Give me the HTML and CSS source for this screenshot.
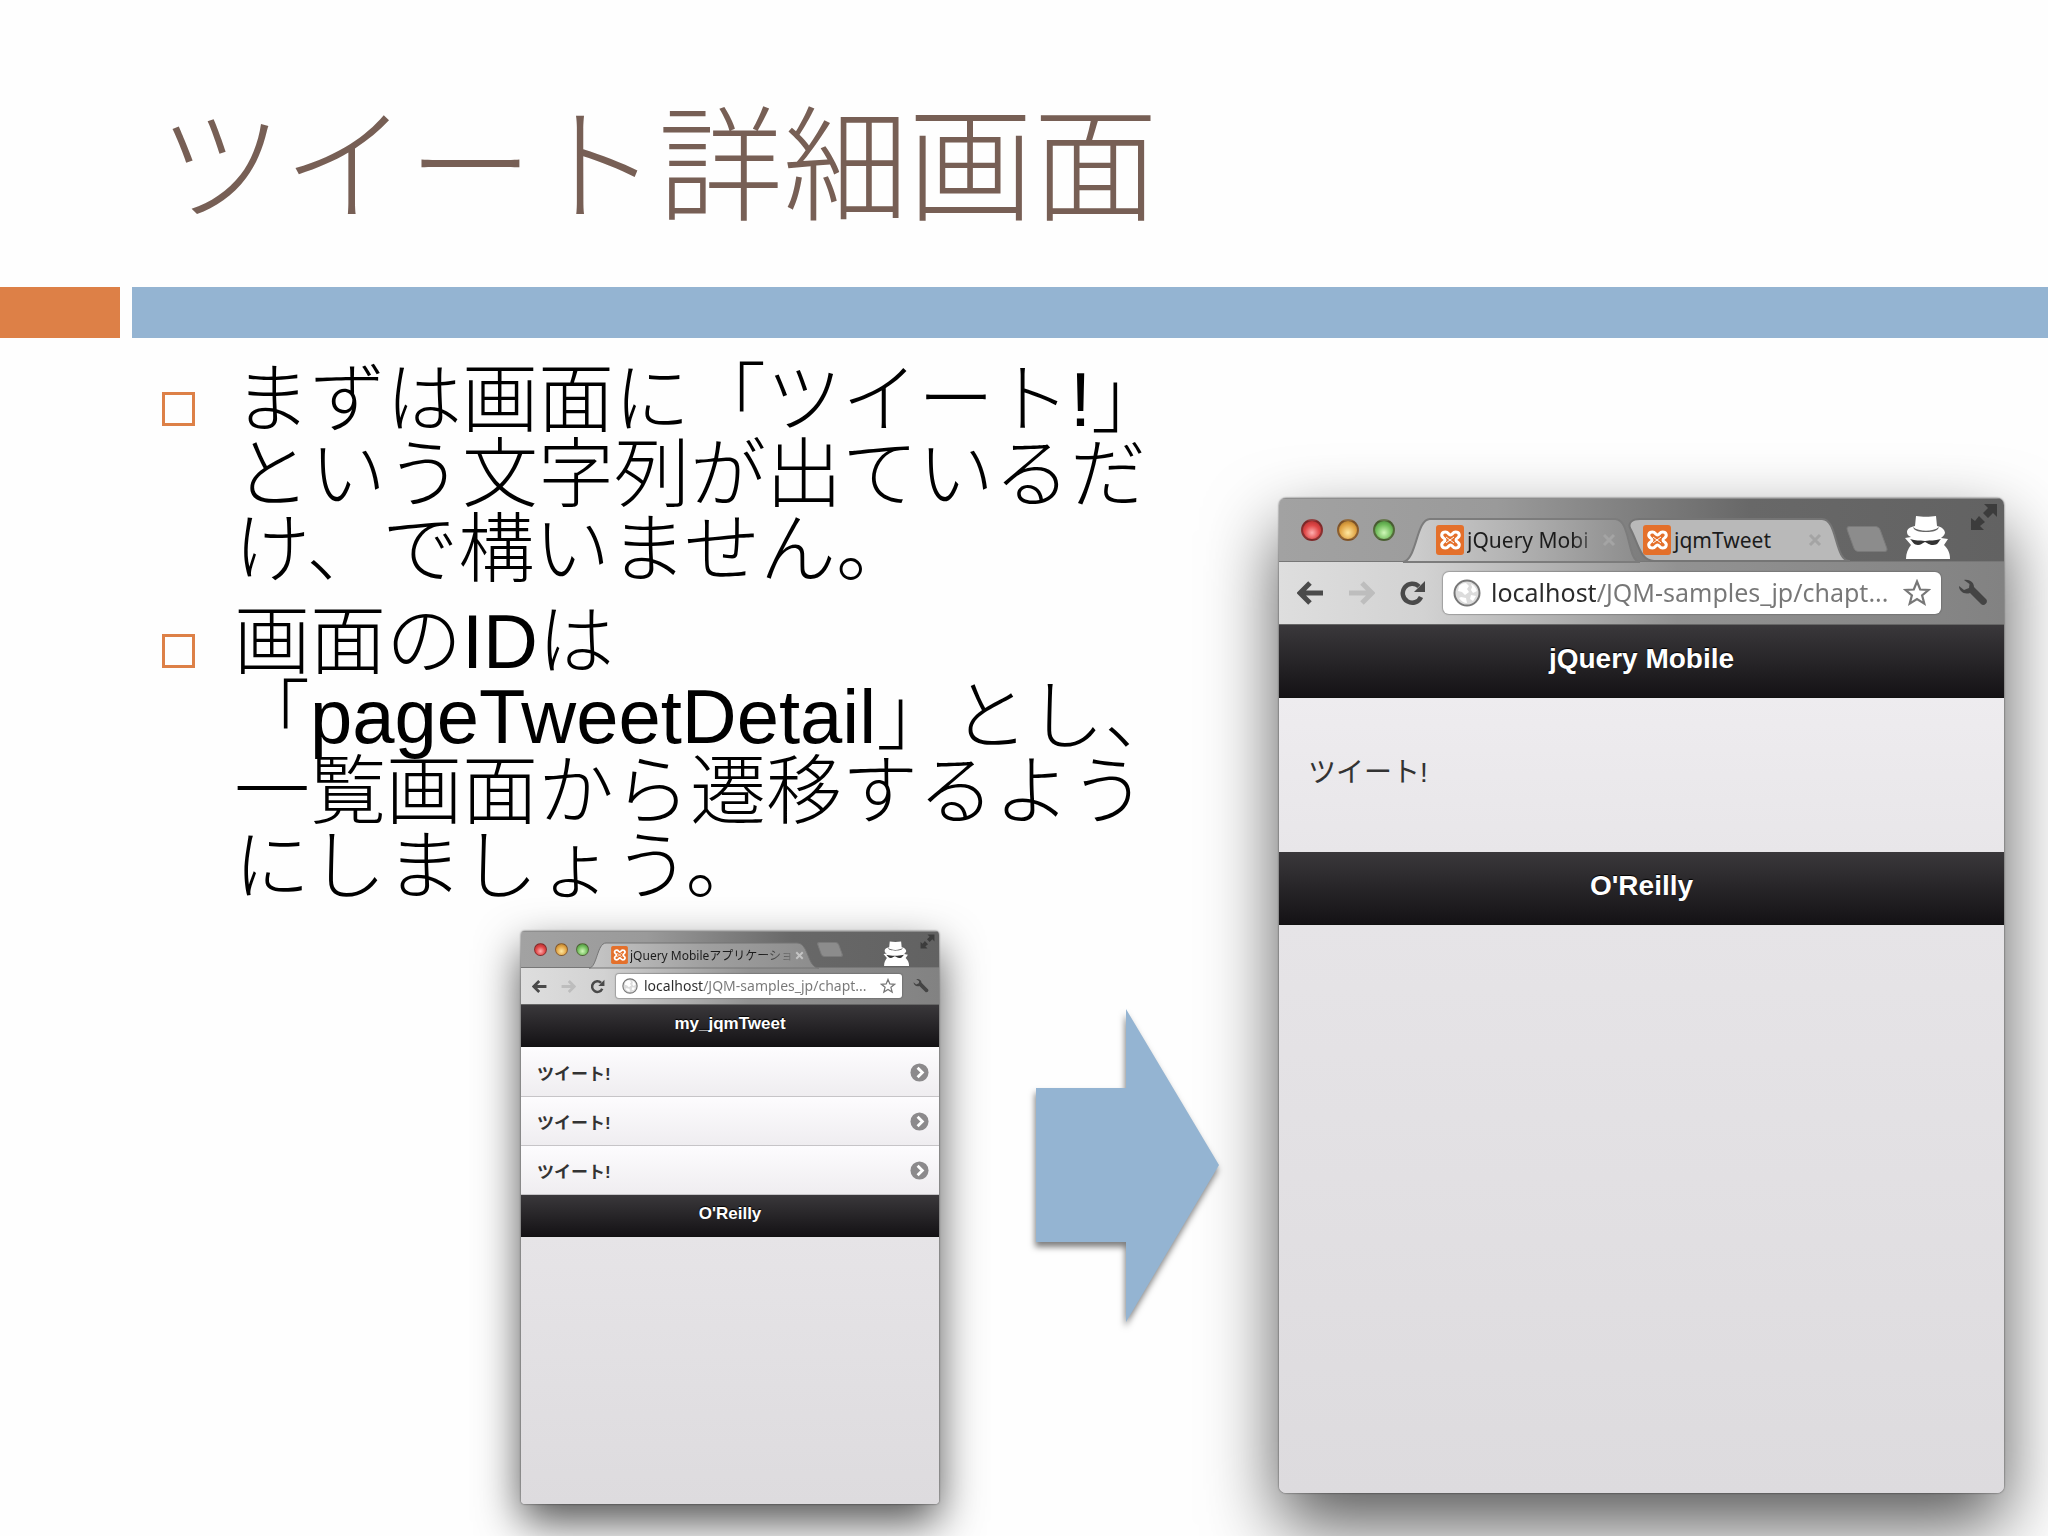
FILE: index.html
```html
<!DOCTYPE html>
<html lang="ja">
<head>
    <meta charset="UTF-8">
    <meta name="viewport" content="width=device-width, initial-scale=1.0">
    <title>ツイート詳細画面</title>
    <link rel="stylesheet" href="styles.css">
</head>
<body>
    <!-- Shared icons -->
    <svg class="sprite" aria-hidden="true">
        <symbol id="icon-back" viewBox="0 0 27 24">
            <path d="M13 2 3 12l10 10M4 12h22" fill="none" stroke="currentColor" stroke-width="5"/>
        </symbol>
        <symbol id="icon-forward" viewBox="0 0 27 24">
            <path d="M14 2l10 10-10 10M23 12H1" fill="none" stroke="currentColor" stroke-width="5"/>
        </symbol>
        <symbol id="icon-reload" viewBox="0 0 27 26">
            <path d="M20 6.500A9.500 9.500 0 1 0 22 17" fill="none" stroke="currentColor" stroke-width="4.500"/>
            <path d="M26 1v11H15z" fill="currentColor"/>
        </symbol>
        <symbol id="icon-globe" viewBox="0 0 28 28">
            <circle cx="14" cy="14" r="12.500" fill="#dcdcdc" stroke="#777" stroke-width="2"/>
            <path d="M6 7c2-2 4-3 7-3l3 3-2 3 2 3-4 3-3-3-4-1zM18 5c3 1 5 4 6 7l-4 2-2-3 1-3zM8 18l5 1 1 5c-3 0-6-2-8-5zM18 16l5 1-3 5-3-2z" fill="#fff"/>
        </symbol>
        <symbol id="icon-star" viewBox="0 0 28 28">
            <path d="M14 2.500l3.200 8 8.300.5-6.400 5.300 2.200 8.300L14 20l-7.300 4.600 2.200-8.300L2.500 11l8.300-.5z" fill="#fff" stroke="#777" stroke-width="2.200"/>
        </symbol>
        <symbol id="icon-wrench" viewBox="0 0 30 28">
            <path d="M6 1c5-1 10 2 10 7l12 12c3 3-2 8-5 5L12 14C6 16 1 12 1 7l5 4 5-2 .5-4z" fill="currentColor"/>
        </symbol>
        <symbol id="icon-favicon" viewBox="0 0 28 30">
            <rect width="28" height="30" rx="3" fill="#e4702b"/>
            <path d="M9.500 7c-4 0-5 4-2 6 2 1 2 3 0 4-3 2-2 6 2 6 3 0 3-3 5-3s2 3 5 3c4 0 5-4 2-6-2-1-2-3 0-4 3-2 2-6-2-6-3 0-3 3-5 3s-2-3-5-3z" fill="#e4702b" stroke="#fff" stroke-width="3"/>
            <path d="M10 12l8 6M18 12l-8 6" stroke="#fff" stroke-width="1"/>
        </symbol>
        <symbol id="icon-close" viewBox="0 0 14 14">
            <path d="M2 2l10 10M12 2 2 12" fill="none" stroke="currentColor" stroke-width="3"/>
        </symbol>
        <symbol id="icon-incognito" viewBox="0 0 46 44">
            <path d="M11 11l1-10c6 1 14 1 20 0l1 10c5 1 8 4 8 7-1 3-3 4-4 5l7 1-4 6c4 4 6 8 6 14H2c0-6 2-10 5-14l-6-7 6-1C4 21 3 19 3 17c0-3 3-5 8-6z" fill="#fff"/>
            <path d="M9 12c6 5 20 5 26 0-1 4-6 5-13 5s-12-1-13-5z" fill="#666"/>
            <path d="M6 24c6 2 9 1 15 2 6-1 9 0 16-2-3 3-3 6-8 6-4 0-5-2-8-3-3 1-4 3-7 3-4 0-5-3-8-6z" fill="#333"/>
        </symbol>
        <symbol id="icon-expand" viewBox="0 0 28 28">
            <path d="M14 1h13v13l-4-4-5 5-5-5 5-5zM1 15l4 3 4-5 6 6-5 4 4 4H1z" fill="currentColor"/>
        </symbol>
        <symbol id="icon-chevron" viewBox="0 0 20 20">
            <circle cx="10" cy="10" r="9.500" fill="#8c8a8c"/>
            <path d="M8 5l5 5-5 5" fill="none" stroke="#fff" stroke-width="3"/>
        </symbol>
    </svg>

    <main class="slide">
        <h1 class="slide-title">ツイート詳細画面</h1>
        <div class="rule">
            <span class="rule-accent"></span>
            <span class="rule-line"></span>
        </div>

        <div class="slide-body">
            <div class="left">
                <ul class="bullets">
                    <li>まずは画面に「ツイート!」<br>という文字列が出ているだ<br>け、で構いません。</li>
                    <li>画面のIDは<br>「pageTweetDetail」とし、<br>一覧画面から遷移するよう<br>にしましょう。</li>
                </ul>

                <div class="flow">
                    <!-- List screen -->
                    <section class="window window-small">
                        <div class="tabstrip">
                            <span class="lights"><i class="light red"></i><i class="light yellow"></i><i class="light green"></i></span>
                            <button class="tab tab-active">
                                <svg class="tab-shape" viewBox="0 0 230 26" preserveAspectRatio="none">
                                    <defs>
                                        <linearGradient id="tabSmall"><stop offset="0" stop-color="#c6c6c6"/><stop offset=".5" stop-color="#a0a0a0"/><stop offset="1" stop-color="#8c8c8c"/></linearGradient>
                                    </defs>
                                    <path d="M0 26C8 26 8 1 17 1H208C220 1 218 26 230 26z" fill="url(#tabSmall)" stroke="#747474"/>
                                </svg>
                                <svg class="favicon"><use href="#icon-favicon"/></svg>
                                <span class="tab-title">jQuery Mobileアプリケーショ</span>
                                <svg class="tab-close"><use href="#icon-close"/></svg>
                            </button>
                            <button class="new-tab" aria-label="新しいタブ"></button>
                            <svg class="incognito"><use href="#icon-incognito"/></svg>
                            <svg class="expand"><use href="#icon-expand"/></svg>
                        </div>
                        <div class="toolbar">
                            <div class="nav">
                                <button aria-label="戻る"><svg><use href="#icon-back"/></svg></button>
                                <button class="disabled" aria-label="進む"><svg><use href="#icon-forward"/></svg></button>
                                <button aria-label="再読み込み"><svg><use href="#icon-reload"/></svg></button>
                            </div>
                            <div class="omnibox">
                                <svg><use href="#icon-globe"/></svg>
                                <input type="text" aria-label="アドレス" value="localhost/JQM-samples_jp/chapt...">
                                <svg><use href="#icon-star"/></svg>
                            </div>
                            <button class="wrench" aria-label="設定"><svg><use href="#icon-wrench"/></svg></button>
                        </div>
                        <h2 class="page-bar">my_jqmTweet</h2>
                        <ul class="tweets">
                            <li><a href="#detail">ツイート!<svg><use href="#icon-chevron"/></svg></a></li>
                            <li><a href="#detail">ツイート!<svg><use href="#icon-chevron"/></svg></a></li>
                            <li><a href="#detail">ツイート!<svg><use href="#icon-chevron"/></svg></a></li>
                        </ul>
                        <h2 class="page-bar">O'Reilly</h2>
                        <div class="page-rest"></div>
                    </section>

                    <svg class="arrow" viewBox="0 0 183 313">
                        <path d="M0 79H90V0L183 156 90 313V233H0z" fill="#94b4d2"/>
                    </svg>
                </div>
            </div>

            <!-- Detail screen -->
            <section class="window window-large" id="detail">
                <div class="tabstrip">
                    <span class="lights"><i class="light red"></i><i class="light yellow"></i><i class="light green"></i></span>
                    <button class="tab tab-active">
                        <svg class="tab-shape" viewBox="0 0 237 44" preserveAspectRatio="none">
                            <defs>
                                <linearGradient id="tabLarge"><stop offset="0" stop-color="#cfcfcf"/><stop offset=".5" stop-color="#b0b0b0"/><stop offset="1" stop-color="#8c8c8c"/></linearGradient>
                            </defs>
                            <path d="M0 44C14 42 13 1 27 1H212C228 1 224 44 237 44z" fill="url(#tabLarge)" stroke="#7c7c7c" stroke-width="2"/>
                        </svg>
                        <svg class="favicon"><use href="#icon-favicon"/></svg>
                        <span class="tab-title">jQuery Mobi</span>
                        <svg class="tab-close"><use href="#icon-close"/></svg>
                    </button>
                    <button class="tab tab-back">
                        <svg class="tab-shape" viewBox="0 0 222 44" preserveAspectRatio="none">
                            <path d="M12 1H194C210 1 206 43 222 43H26C12 43 10 24 2 10 0 5 4 1 12 1z" fill="#b9b9b9" stroke="#757575" stroke-width="2"/>
                        </svg>
                        <svg class="favicon"><use href="#icon-favicon"/></svg>
                        <span class="tab-title">jqmTweet</span>
                        <svg class="tab-close"><use href="#icon-close"/></svg>
                    </button>
                    <button class="new-tab" aria-label="新しいタブ"></button>
                    <svg class="incognito"><use href="#icon-incognito"/></svg>
                    <svg class="expand"><use href="#icon-expand"/></svg>
                </div>
                <div class="toolbar">
                    <div class="nav">
                        <button aria-label="戻る"><svg><use href="#icon-back"/></svg></button>
                        <button class="disabled" aria-label="進む"><svg><use href="#icon-forward"/></svg></button>
                        <button aria-label="再読み込み"><svg><use href="#icon-reload"/></svg></button>
                    </div>
                    <div class="omnibox">
                        <svg><use href="#icon-globe"/></svg>
                        <input type="text" aria-label="アドレス" value="localhost/JQM-samples_jp/chapt...">
                        <svg><use href="#icon-star"/></svg>
                    </div>
                    <button class="wrench" aria-label="設定"><svg><use href="#icon-wrench"/></svg></button>
                </div>
                <h2 class="page-bar">jQuery Mobile</h2>
                <p class="page-content">ツイート!</p>
                <h2 class="page-bar">O'Reilly</h2>
                <div class="page-rest"></div>
            </section>
        </div>
    </main>
</body>
</html>
```
FILE: styles.css
```css
*,
*::before {
    box-sizing: border-box;
}
body {
    margin: 0;
    background: #fefefe;
    color: #000;
    font-family: "Liberation Sans", "Noto Sans CJK JP", sans-serif;
}
button {
    border: 0;
    padding: 0;
    background: none;
    font: inherit;
    color: inherit;
}
svg {
    display: block;
    flex: none;
}
.sprite {
    position: absolute;
    width: 0;
    height: 0;
}

/* Slide */
.slide {
    min-height: 100vh;
    overflow: hidden;
}
.slide-title {
    margin: 0;
    padding: 78px 158px 29px;
    font-size: 125px;
    line-height: 180px;
    font-weight: 300;
    color: #775f55;
}
.rule {
    display: flex;
    gap: 12px;
    height: 51px;
}
.rule-accent {
    width: 120px;
    background: #dd8047;
}
.rule-line {
    flex: 1;
    background: #94b4d2;
}
.slide-body {
    display: grid;
    grid-template-columns: 1119fr 725fr;
    align-items: start;
    padding: 0 44px 0 160px;
}

/* Bullets */
.bullets {
    margin: 0;
    padding: 24px 0 0;
    list-style: none;
    font-size: 76px;
    line-height: 75px;
    font-weight: 300;
    white-space: nowrap;
}
.bullets li {
    position: relative;
    padding-left: 74px;
}
.bullets li + li {
    margin-top: 17px;
}
.bullets li::before {
    content: "";
    position: absolute;
    left: 2px;
    top: 30px;
    width: 33px;
    height: 34px;
    border: 3px solid #dd8047;
}

/* List screen, arrow */
.flow {
    display: flex;
    align-items: flex-start;
    gap: 97px;
    padding: 27px 60px 0 361px;
}
.flow .window {
    flex: 418 1 0;
    min-width: 0;
}
.arrow {
    flex: 183 1 0;
    min-width: 0;
    margin-top: 78px;
    overflow: visible;
    filter: drop-shadow(-1px 5px 3px rgba(0, 0, 0, 0.5));
}

/* Browser window */
.window {
    --strip: 37px;
    --bar: 42px;
    --text: 17px;
    overflow: hidden;
    border-radius: 4px;
    background: #e2e0e3;
    box-shadow: 0 0 2px rgba(0, 0, 0, 0.7), 0 18px 44px rgba(0, 0, 0, 0.68);
}
.window-large {
    --strip: 64px;
    --bar: 73px;
    --text: 28px;
    margin-top: 160px;
    border-radius: 7px;
    box-shadow: 0 0 2px rgba(0, 0, 0, 0.7), 0 32px 72px rgba(0, 0, 0, 0.66);
}
.tabstrip {
    display: flex;
    align-items: flex-end;
    height: var(--strip);
    padding: 0 4px 0 13px;
    background: linear-gradient(90deg, #a2a2a2, #9a9a9a 30%, #686868 65%, #626262);
    box-shadow: inset 0 1px #8e8e8e, inset 0 -1px #777;
}
.window-large .tabstrip {
    padding: 0 6px 0 22px;
}
.lights {
    display: flex;
    align-self: center;
    gap: 8px;
}
.light {
    width: 13px;
    height: 13px;
    border: 1px solid rgba(60, 30, 30, 0.5);
    border-radius: 50%;
}
.red {
    background: radial-gradient(circle at 50% 65%, #ffb0b0, #e04848 50%, #a02424);
}
.yellow {
    background: radial-gradient(circle at 50% 65%, #ffe8a0, #e0a344 55%, #9c6a20);
}
.green {
    background: radial-gradient(circle at 50% 65%, #d0f8b8, #6fbb5a 55%, #3d7a30);
}
.window-large .lights {
    gap: 14px;
}
.window-large .light {
    width: 22px;
    height: 22px;
    border-width: 2px;
}

/* Tabs */
.tab {
    position: relative;
    display: flex;
    align-items: center;
    gap: 2px;
    flex: 0 1 230px;
    height: 26px;
    min-width: 0;
    padding: 0 18px 0 22px;
    font-family: "Noto Sans", "Noto Sans CJK JP", sans-serif;
    font-size: 12px;
    color: #1c1c1c;
}
.tab > * {
    position: relative;
}
.tab .tab-shape {
    position: absolute;
    inset: 0;
    width: 100%;
    height: 100%;
    overflow: visible;
}
.window-large .tab {
    flex-basis: 237px;
    gap: 3px;
    height: 44px;
    margin-left: 8px;
    padding: 0 24px 0 33px;
    font-size: 21px;
}
.window-large .tab-back {
    flex-basis: 222px;
    margin-left: -12px;
    padding: 0 28px 0 15px;
}
.favicon {
    width: 17px;
    height: 18px;
}
.window-large .favicon {
    width: 28px;
    height: 30px;
}
.tab-title {
    flex: 1;
    text-align: left;
    white-space: nowrap;
}
.tab-active .tab-title {
    -webkit-mask-image: linear-gradient(90deg, #000 80%, rgba(0, 0, 0, 0.2));
    mask-image: linear-gradient(90deg, #000 80%, rgba(0, 0, 0, 0.2));
}
.tab-close {
    width: 9px;
    height: 9px;
    color: #c4c4c4;
}
.window-large .tab-close {
    width: 14px;
    height: 14px;
    color: #a4a4a4;
}
.new-tab {
    align-self: center;
    width: 22px;
    height: 15px;
    border: 1px solid #7a7a7a;
    border-radius: 3px;
    background: #8c8c8c;
    transform: skewX(20deg);
}
.window-large .new-tab {
    align-self: flex-start;
    width: 34px;
    height: 26px;
    margin-top: 28px;
    border-radius: 4px;
}
.incognito {
    width: 28px;
    height: 25px;
    margin: 0 10px 2px auto;
}
.window-large .incognito {
    width: 46px;
    height: 44px;
    margin: 0 20px 3px auto;
}
.expand {
    align-self: flex-start;
    width: 15px;
    height: 15px;
    margin-top: 3px;
    color: #3c3c3c;
}
.window-large .expand {
    width: 28px;
    height: 28px;
    margin-top: 5px;
}

/* Toolbar */
.toolbar {
    display: flex;
    align-items: center;
    gap: 11px;
    height: 37px;
    padding: 0 10px 0 11px;
    background: linear-gradient(90deg, #dedede, #d2d2d2 20%, #929292 55%, #828282);
    border-bottom: 1px solid #666;
}
.nav {
    display: flex;
    gap: 14px;
}
.nav button,
.nav svg {
    width: 15px;
    height: 15px;
    color: #4a4a4a;
}
.nav .disabled svg {
    color: #bdbdbd;
}
.omnibox {
    display: flex;
    align-items: center;
    flex: 1;
    gap: 6px;
    height: 24px;
    min-width: 0;
    padding: 0 6px;
    border-radius: 3px;
    background: #fff;
    box-shadow: 0 0 1px 1px rgba(90, 90, 90, 0.4);
}
.omnibox svg {
    width: 16px;
    height: 16px;
}
.omnibox input {
    --host: 60px;
    flex: 1;
    min-width: 0;
    padding: 0 0 1px;
    border: 0;
    outline: 0;
    background: linear-gradient(90deg, #2a2a2a var(--host), #777 var(--host));
    -webkit-background-clip: text;
    background-clip: text;
    color: transparent;
    font-family: "Noto Sans", sans-serif;
    font-size: 14px;
}
.wrench svg {
    width: 16px;
    height: 16px;
    color: #444;
}
.window-large .toolbar {
    gap: 17px;
    height: 63px;
    padding: 0 16px 0 18px;
}
.window-large .nav {
    gap: 24px;
}
.window-large .nav button,
.window-large .nav svg {
    width: 27px;
    height: 26px;
}
.window-large .omnibox {
    gap: 10px;
    height: 42px;
    padding: 0 10px;
    border-radius: 6px;
}
.window-large .omnibox svg {
    width: 28px;
    height: 28px;
}
.window-large .omnibox input {
    --host: 105px;
    padding-bottom: 3px;
    font-size: 25px;
}
.window-large .wrench svg {
    width: 30px;
    height: 28px;
}

/* Mobile page */
.page-bar {
    height: var(--bar);
    margin: 0;
    border-bottom: 1px solid #111;
    background: linear-gradient(#3a383b, #141215);
    color: #fff;
    font-size: var(--text);
    line-height: calc(var(--bar) - 5px);
    font-weight: bold;
    text-align: center;
    text-shadow: 0 -1px 1px #000;
}
.tweets {
    margin: 0;
    padding: 1px 0 0;
    list-style: none;
    background: #fdfcfe;
}
.tweets a {
    display: flex;
    align-items: center;
    justify-content: space-between;
    height: 49px;
    padding: 0 10px 0 16px;
    border-bottom: 1px solid #c6c4c7;
    background: linear-gradient(#fdfcfe, #efedf0);
    color: #333;
    font-size: 17px;
    font-weight: bold;
    text-decoration: none;
}
.tweets svg {
    width: 19px;
    height: 19px;
}
.page-content {
    height: 154px;
    margin: 0;
    padding: 0 29px;
    background: linear-gradient(#eeecef, #e8e6e9);
    color: #333;
    font-size: 28px;
    line-height: 150px;
}
.page-rest {
    height: 267px;
    background: linear-gradient(#e6e4e7, #dddbde);
}
.window-large .page-rest {
    height: 568px;
}
```
